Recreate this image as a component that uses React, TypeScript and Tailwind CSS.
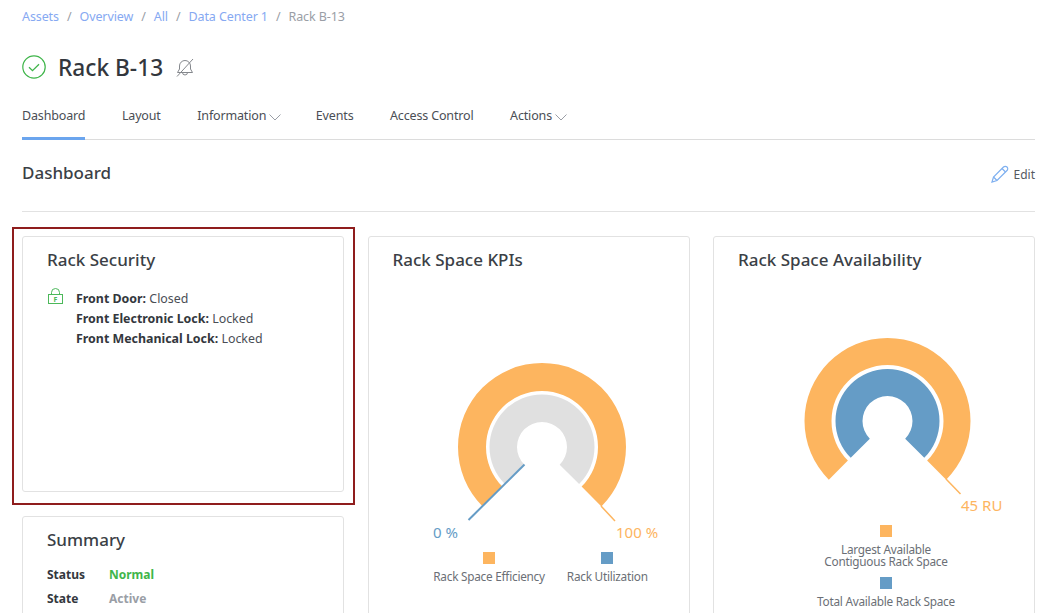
import React from "react";

const ORANGE = "#fdb55f";
const BLUE = "#659cc6";

// ring segment running 270deg, from lower left round the top to lower right
const ringPath = (cx: number, cy: number, r1: number, r0: number) => {
  const d = Math.SQRT1_2;
  const p = (r: number, sx: number) => `${cx + sx * r * d} ${cy + r * d}`;
  return `M${p(r1, -1)} A${r1} ${r1} 0 1 1 ${p(r1, 1)} L${p(r0, 1)} A${r0} ${r0} 0 1 0 ${p(r0, -1)} Z`;
};

const tabs = [
  { label: "Dashboard", active: true },
  { label: "Layout" },
  { label: "Information", menu: true },
  { label: "Events" },
  { label: "Access Control" },
  { label: "Actions", menu: true },
];

const crumbs = ["Assets", "Overview", "All", "Data Center 1"];

const Card = ({ title, children, className = "" }: { title: string; children?: React.ReactNode; className?: string }) => (
  <div className={`rounded-[3px] border border-[#e2e2e2] bg-white ${className}`}>
    <h3 className="pl-6 pt-[10px] text-[17px] leading-[26px] font-medium text-[#3b3f46]">{title}</h3>
    {children}
  </div>
);

const KpiGauge = () => (
  <svg width="320" height="204" className="block">
    <path d={ringPath(173, 110, 84, 56)} fill={ORANGE} />
    <path d={ringPath(173, 110, 52.5, 25)} fill="#e0e0e0" />
    <line x1="232" y1="169" x2="246" y2="184" stroke={ORANGE} strokeWidth="1.5" />
    <line x1="155.5" y1="127.5" x2="99.5" y2="183" stroke={BLUE} strokeWidth="2" />
    <text x="64" y="201" fontSize="15" fill={BLUE}>0 %</text>
    <text x="247" y="201" fontSize="15" fill={ORANGE}>100 %</text>
  </svg>
);

const AvailabilityGauge = () => (
  <svg width="320" height="186" className="block">
    <path d={ringPath(173.5, 84, 83, 56)} fill={ORANGE} />
    <path d={ringPath(173.5, 84, 52, 25)} fill={BLUE} />
    <line x1="232" y1="142" x2="246.5" y2="157" stroke={ORANGE} strokeWidth="1.5" />
    <text x="247" y="174" fontSize="15" fill={ORANGE}>45 RU</text>
  </svg>
);

const Chevron = () => (
  <svg width="12" height="7" viewBox="0 0 12 7" fill="none" className="mt-[2px] -mr-[2px]">
    <path d="M.5.5 6 6 11.5.5" stroke="#9a9ea6" />
  </svg>
);

export default function App() {
  return (
    <div
      className="h-[613px] w-[1054px] overflow-hidden bg-white pl-[22px] pr-[19px] text-[#3b3f46]"
      style={{ fontFamily: '"Noto Sans", "Open Sans", sans-serif' }}
    >
      <nav className="flex h-[33px] items-center gap-[8px] pt-[1px] text-[12.5px] tracking-[-0.1px]">
        {crumbs.map((c) => (
          <React.Fragment key={c}>
            <a className="text-[#86a9f2]">{c}</a>
            <span className="text-[#9a9ea6]">/</span>
          </React.Fragment>
        ))}
        <span className="text-[#9a9ea6]">Rack B-13</span>
      </nav>

      <div className="mt-[15px] flex h-[38px] items-center">
        <svg width="24" height="24" viewBox="0 0 24 24" fill="none" className="shrink-0">
          <circle cx="12" cy="12" r="11.2" stroke="#3fb54a" strokeWidth="1.2" />
          <path d="M7 12.2l3.5 3.5 6.5-6.5" stroke="#3fb54a" strokeWidth="1.3" />
        </svg>
        <h1 className="mt-[2px] ml-3 text-[22.7px] leading-none font-medium text-[#33373d]">Rack B-13</h1>
        <svg width="18" height="20" viewBox="0 0 18 20" fill="none" stroke="#85888d" className="mt-[2px] ml-[13px]">
          <path d="M9 2.5A5.5 5.5 0 0 0 3.5 8v3l-2 3.5h15l-2-3.5V8A5.5 5.5 0 0 0 9 2.5Z" />
          <path d="M6.5 14.5a2.5 2.5 0 0 0 5 0" />
          <path d="M17 1 1 18.5" />
        </svg>
      </div>

      <div className="mt-[15px] flex h-[39px] items-stretch gap-[36.5px] border-b border-[#dcdcdc] text-[12.5px] tracking-[-0.15px] text-[#4a4e55]">
        {tabs.map((t) => (
          <div
            key={t.label}
            className={`-mb-px flex items-center gap-[3px] border-b-[3px] pb-[6px] ${t.active ? "border-[#6ba5ee]" : "border-transparent"}`}
          >
            {t.label}
            {t.menu && <Chevron />}
          </div>
        ))}
      </div>

      <div className="flex h-[72px] items-center justify-between border-b border-[#e2e2e2] pb-[6px]">
        <h2 className="text-[17px] font-medium text-[#3b3f46]">Dashboard</h2>
        <div className="flex items-center gap-[5px] pt-[4px] text-[12px] text-[#55595f]">
          <svg width="18" height="18" viewBox="0 0 18 18" fill="none" stroke="#7fb0f0" strokeWidth="1.2" className="-mt-[2px]">
            <path d="M1 17l1.5-5L12.5 2A1.8 1.8 0 0 1 16 5.5L6 15.5Z" />
            <path d="M11 3.5 14.5 7M2.5 12 6 15.5" />
          </svg>
          Edit
        </div>
      </div>

      <div className="mt-[24px] grid grid-cols-3 gap-x-[23.5px]">
        <div className="flex flex-col gap-[24px]">
          <div className="relative">
            <Card title="Rack Security" className="h-[256px]">
              <div className="mt-[15px] flex pl-[25px]">
                <svg width="15" height="16" viewBox="0 0 15 16" fill="none" className="shrink-0">
                  <path d="M3.5 6.5V4.5a4 4 0 0 1 8 0v2" stroke="#4cb85a" />
                  <rect x=".5" y="6.5" width="14" height="9" stroke="#4cb85a" />
                  <text x="7.5" y="13.5" textAnchor="middle" fontSize="7" fontWeight="700" fill="#4cb85a">F</text>
                </svg>
                <div className="mt-[1px] ml-[13px] text-[12.4px] leading-[20px] text-[#4a4e55]">
                  <p><b className="font-bold text-[#33373d]">Front Door:</b> Closed</p>
                  <p><b className="font-bold text-[#33373d]">Front Electronic Lock:</b> Locked</p>
                  <p><b className="font-bold text-[#33373d]">Front Mechanical Lock:</b> Locked</p>
                </div>
              </div>
            </Card>
            <div className="pointer-events-none absolute -top-[9px] -right-[11px] -bottom-[13px] -left-[10px] border-2 border-[#8f1d1d]" />
          </div>
          <Card title="Summary" className="h-[200px]">
            <dl className="mt-[12px] grid grid-cols-[62px_1fr] gap-y-[4px] pl-6 text-[12px] leading-[20px] font-bold">
              <dt className="text-[#33373d]">Status</dt>
              <dd className="text-[#3fb54a]">Normal</dd>
              <dt className="text-[#33373d]">State</dt>
              <dd className="text-[#9a9ea6]">Active</dd>
            </dl>
          </Card>
        </div>

        <Card title="Rack Space KPIs" className="h-[480px]">
          <div className="mt-[64px]">
            <KpiGauge />
          </div>
          <div className="mt-[11px] flex justify-center gap-[22px] pl-6 text-[11.8px] tracking-[-0.25px] text-[#6b6f76]">
            <div className="flex flex-col items-center gap-[4px]">
              <span className="h-3 w-3 bg-[#fdb55f]" />
              Rack Space Efficiency
            </div>
            <div className="flex flex-col items-center gap-[4px]">
              <span className="h-3 w-3 bg-[#659cc6]" />
              Rack Utilization
            </div>
          </div>
        </Card>

        <Card title="Rack Space Availability" className="h-[480px]">
          <div className="mt-[64px]">
            <AvailabilityGauge />
          </div>
          <div className="flex flex-col items-center pl-6 text-center text-[11.8px] leading-[12px] tracking-[-0.25px] text-[#6b6f76]">
            <span className="mt-[2px] h-3 w-3 bg-[#fdb55f]" />
            <p className="mt-[6px]">Largest Available<br />Contiguous Rack Space</p>
            <span className="mt-[10px] h-3 w-3 bg-[#659cc6]" />
            <p className="mt-[6px]">Total Available Rack Space</p>
          </div>
        </Card>
      </div>
    </div>
  );
}
